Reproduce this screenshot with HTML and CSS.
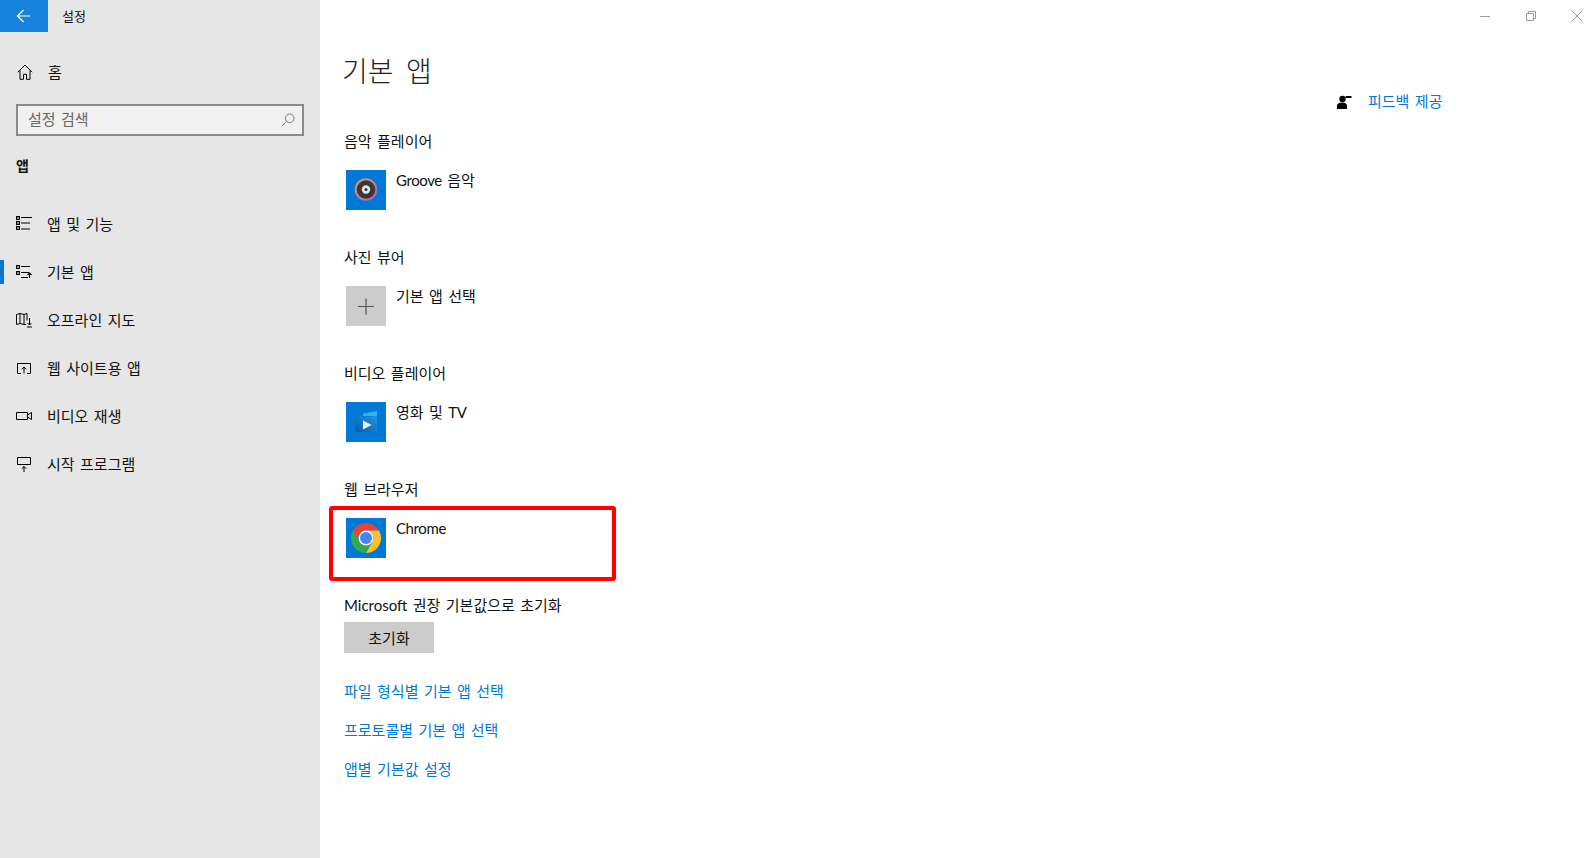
FILE: index.html
```html
<!DOCTYPE html>
<html lang="ko">
<head>
    <meta charset="UTF-8">
    <meta name="viewport" content="width=device-width, initial-scale=1.0">
    <title>설정</title>
    <link rel="stylesheet" href="styles.css">
</head>
<body>
    <div class="window">
        <nav class="sidebar">
            <div class="titlebar">
                <div class="back">
                    <svg width="16" height="16" viewBox="0 0 16 16" fill="none" stroke="#fff" stroke-width="1.2"><path d="M1.500 8h13M7.500 2l-6 6 6 6"/></svg>
                </div>
                <span class="app-title">설정</span>
            </div>
            <div class="nav-item home">
                <svg class="nav-icon" width="16" height="16" viewBox="0 0 16 16" fill="none" stroke="#000" stroke-width="1"><path d="M.8 8.200 8 1l7.200 7.200M3 6.500v8.800h3.500v-5h3v5H13V6.500"/></svg>
                <span>홈</span>
            </div>
            <div class="search">
                <span>설정 검색</span>
                <svg width="14" height="14" viewBox="0 0 14 14" fill="none" stroke="#777" stroke-width="1"><circle cx="8.700" cy="5.300" r="4.300"/><path d="M5.600 8.400.8 13.200"/></svg>
            </div>
            <div class="group-title">앱</div>
            <div class="nav-item">
                <svg class="nav-icon" width="16" height="16" viewBox="0 0 16 16" fill="none" stroke="#000" stroke-width="1.200"><path d="M.6.6h2.800v2.800H.6zM.6 5.600h2.800v2.800H.6zM.6 10.600h2.800v2.800H.6zM5 1.500h11M5 7h9M5 13h9"/></svg>
                <span>앱 및 기능</span>
            </div>
            <div class="nav-item active">
                <svg class="nav-icon" width="16" height="16" viewBox="0 0 16 16" fill="none" stroke="#000" stroke-width="1.100"><path d="M.6 1.600h2.800v2.800H.6zM.6 7.600h2.800v2.800H.6zM5 2.500h9M5 8.500h8M5 13.500h7M13.500 14V9M11.500 11l2-2 2 2"/></svg>
                <span>기본 앱</span>
            </div>
            <div class="nav-item">
                <svg class="nav-icon" width="16" height="16" viewBox="0 0 16 16" fill="none" stroke="#000" stroke-width="1"><path d="M.5 2.500 4 1.500l4 1 3-1v7M.5 2.500v10L4 11.500l4 1h2M4 1.500v10M8 2.500v10M13.500 6v7M11.500 11l2 2 2-2M11 15h5"/></svg>
                <span>오프라인 지도</span>
            </div>
            <div class="nav-item">
                <svg class="nav-icon" width="16" height="16" viewBox="0 0 16 16" fill="none" stroke="#000" stroke-width="1"><path d="M5 13.500H1.500v-10h13v10H11M8 13.500V7M5.800 9.200 8 7l2.200 2.200"/></svg>
                <span>웹 사이트용 앱</span>
            </div>
            <div class="nav-item">
                <svg class="nav-icon" width="16" height="16" viewBox="0 0 16 16" fill="none" stroke="#000" stroke-width="1"><path d="M.5 4.500h11v7H.5zM11.500 7l4-2.500v7l-4-2.500"/></svg>
                <span>비디오 재생</span>
            </div>
            <div class="nav-item">
                <svg class="nav-icon" width="16" height="16" viewBox="0 0 16 16" fill="none" stroke="#000" stroke-width="1"><path d="M1.500 1.500h13v7h-13zM8 16v-5.500M5.800 12.700 8 10.500l2.200 2.200"/></svg>
                <span>시작 프로그램</span>
            </div>
        </nav>

        <main class="main">
            <div class="window-controls">
                <div class="win-btn">
                    <svg width="10" height="10" viewBox="0 0 10 10" stroke="#999" fill="none"><path d="M0 5.500h10"/></svg>
                </div>
                <div class="win-btn">
                    <svg width="10" height="10" viewBox="0 0 10 10" stroke="#999" fill="none"><path d="M.5 2.500h7v7h-7zM2.500 2.500v-2h7v7h-2"/></svg>
                </div>
                <div class="win-btn">
                    <svg width="10" height="10" viewBox="0 0 10 10" stroke="#999" fill="none"><path d="m0 0 10 10M10 0 0 10"/></svg>
                </div>
            </div>

            <div class="main-body">
                <div class="content">
                    <h1>기본 앱</h1>

                    <section class="default-app">
                        <div class="label">음악 플레이어</div>
                        <div class="app-row">
                            <svg class="tile" width="40" height="40" viewBox="0 0 40 40">
                                <defs>
                                    <linearGradient id="groove" x1="0" y1="0" x2="1" y2="1">
                                        <stop offset="0" stop-color="#f59a3c"/>
                                        <stop offset="1" stop-color="#a060d0"/>
                                    </linearGradient>
                                </defs>
                                <rect width="40" height="40" fill="#0078d7"/>
                                <circle cx="20" cy="19.500" r="11.300" fill="url(#groove)"/>
                                <circle cx="20" cy="19.500" r="9.300" fill="#383838"/>
                                <circle cx="20" cy="19.500" r="4.200" fill="#e4e4e4"/>
                                <circle cx="20" cy="19.500" r="1.500" fill="#333"/>
                                <path d="M26 9.500 30.500 8l-1.500 4.500z" fill="#0078d7"/>
                            </svg>
                            <span class="app-name"><span class="latin">Groove</span> 음악</span>
                        </div>
                    </section>

                    <section class="default-app">
                        <div class="label">사진 뷰어</div>
                        <div class="app-row">
                            <svg class="tile" width="40" height="40" viewBox="0 0 40 40">
                                <rect width="40" height="40" fill="#ccc"/>
                                <path d="M12 20.500h16M20 12.500v16" stroke="#555" stroke-width="1.200" fill="none"/>
                            </svg>
                            <span class="app-name">기본 앱 선택</span>
                        </div>
                    </section>

                    <section class="default-app">
                        <div class="label">비디오 플레이어</div>
                        <div class="app-row">
                            <svg class="tile" width="40" height="40" viewBox="0 0 40 40">
                                <defs>
                                    <linearGradient id="movies" x1="1" y1="0" x2="0" y2="1">
                                        <stop offset="0" stop-color="#1e97e6"/>
                                        <stop offset="1" stop-color="#0a5cab"/>
                                    </linearGradient>
                                </defs>
                                <rect width="40" height="40" fill="#0078d7"/>
                                <path d="M17 11.500 31 9v5H17z" fill="#2fb4ee"/>
                                <path d="M9 17l4-4h4v2l14-1v16H11l-2-2z" fill="url(#movies)"/>
                                <path d="M17 18.500 25.500 23 17 27.500z" fill="#f2f6fa"/>
                            </svg>
                            <span class="app-name">영화 및 <span class="latin">TV</span></span>
                        </div>
                    </section>

                    <section class="default-app">
                        <div class="label">웹 브라우저</div>
                        <div class="app-row">
                            <svg class="tile" width="40" height="40" viewBox="0 0 40 40">
                                <rect width="40" height="40" fill="#0078d7"/>
                                <path d="M33 12.500A15 15 0 0 0 7 12.500L13.500 23.750A7.500 7.500 0 0 1 20 12.500Z" fill="#ea4335"/>
                                <path d="M7 12.500A15 15 0 0 0 20 35L26.500 23.750A7.500 7.500 0 0 1 13.500 23.750Z" fill="#34a853"/>
                                <path d="M33 12.500H20A7.500 7.500 0 0 1 26.500 23.750L20 35A15 15 0 0 0 33 12.500Z" fill="#fbc02d"/>
                                <circle cx="20" cy="20" r="7.500" fill="#fff"/>
                                <circle cx="20" cy="20" r="6" fill="#4285f4"/>
                            </svg>
                            <span class="app-name"><span class="latin">Chrome</span></span>
                            <div class="highlight"></div>
                        </div>
                    </section>

                    <div class="label">Microsoft 권장 기본값으로 초기화</div>
                    <div class="reset-btn">초기화</div>

                    <div class="links">
                        <a href="#">파일 형식별 기본 앱 선택</a>
                        <a href="#">프로토콜별 기본 앱 선택</a>
                        <a href="#">앱별 기본값 설정</a>
                    </div>
                </div>

                <aside class="aside">
                    <div class="feedback">
                        <svg width="16" height="16" viewBox="0 0 16 16" fill="#000"><circle cx="5.500" cy="6" r="3.200"/><path d="M0 16v-3q0-3.500 5-3.500t5 3.500v3z"/><path d="M8.500 3h6v2h-6z"/></svg>
                        <a href="#">피드백 제공</a>
                    </div>
                </aside>
            </div>
        </main>
    </div>
</body>
</html>
```

FILE: styles.css
```css
* {
    box-sizing: border-box;
}
html, body {
    margin: 0;
    height: 100%;
    overflow: hidden;
}
body {
    font-family: Lato, "Noto Sans CJK KR", sans-serif;
    font-size: 15px;
    word-spacing: 1.6px;
    color: #111;
    background: #fff;
}
a {
    color: #0078d7;
    text-decoration: none;
}
.window {
    display: flex;
    height: 858px;
}
.latin {
    letter-spacing: -0.4px;
}

/* left column */
.sidebar {
    width: 320px;
    flex-shrink: 0;
    background: #e6e6e6;
}
.titlebar {
    display: flex;
    align-items: center;
    height: 32px;
}
.back {
    display: flex;
    align-items: center;
    justify-content: center;
    width: 48px;
    height: 32px;
    background: #1883dc;
}
.app-title {
    margin-left: 14px;
    padding-bottom: 2px;
    font-size: 13px;
}
.nav-item {
    position: relative;
    display: flex;
    align-items: center;
    gap: 15px;
    height: 48px;
    padding-left: 16px;
}
.nav-item span {
    padding-bottom: 2px;
}
.nav-item.home {
    margin-top: 16px;
    padding-left: 17px;
}
.nav-item.active::before {
    content: "";
    position: absolute;
    left: 0;
    top: 12px;
    width: 4px;
    height: 24px;
    background: #0078d7;
}
.nav-icon {
    flex-shrink: 0;
}
.search {
    display: flex;
    align-items: center;
    justify-content: space-between;
    height: 32px;
    margin: 8px 16px 0;
    padding: 0 7px 0 10px;
    border: 2px solid #8a8a8a;
    background: #f0f0f0;
    color: #666;
}
.search span {
    padding-bottom: 4px;
}
.group-title {
    height: 24px;
    margin: 18px 0 22px 16px;
    line-height: 24px;
    font-size: 14px;
    font-weight: 700;
}

/* right column */
.main {
    flex: 1;
    min-width: 0;
}
.window-controls {
    display: flex;
    justify-content: flex-end;
    height: 32px;
    margin-right: -9px;
}
.win-btn {
    display: flex;
    align-items: center;
    justify-content: center;
    width: 46px;
}
.main-body {
    display: flex;
    justify-content: space-between;
}
.content {
    padding-left: 24px;
}
h1 {
    height: 40px;
    margin: 19px 0 38px -2px;
    font-size: 28px;
    font-weight: 300;
    line-height: 40px;
    word-spacing: 5px;
    color: #222;
}
.label {
    height: 24px;
    line-height: 24px;
}
.default-app {
    margin-bottom: 35px;
}
.default-app .label {
    margin-bottom: 17px;
}
.app-row {
    position: relative;
    display: flex;
    align-items: flex-start;
    gap: 10px;
    margin-left: 2px;
}
.tile {
    display: block;
    flex-shrink: 0;
}
.app-name {
    line-height: 20px;
}
.highlight {
    position: absolute;
    left: -17px;
    top: -12px;
    width: 287px;
    height: 75px;
    border: 4px solid #f00;
    border-radius: 3px;
}
.reset-btn {
    width: 90px;
    height: 31px;
    margin-top: 5px;
    background: #ccc;
    line-height: 32px;
    text-align: center;
}
.links {
    display: flex;
    flex-direction: column;
    gap: 15px;
    margin-top: 26px;
}
.links a {
    line-height: 24px;
}
.aside {
    width: 254px;
    padding-top: 57px;
}
.feedback {
    display: flex;
    align-items: center;
    gap: 15px;
    height: 24px;
}
.feedback a {
    padding-bottom: 2px;
}
```
